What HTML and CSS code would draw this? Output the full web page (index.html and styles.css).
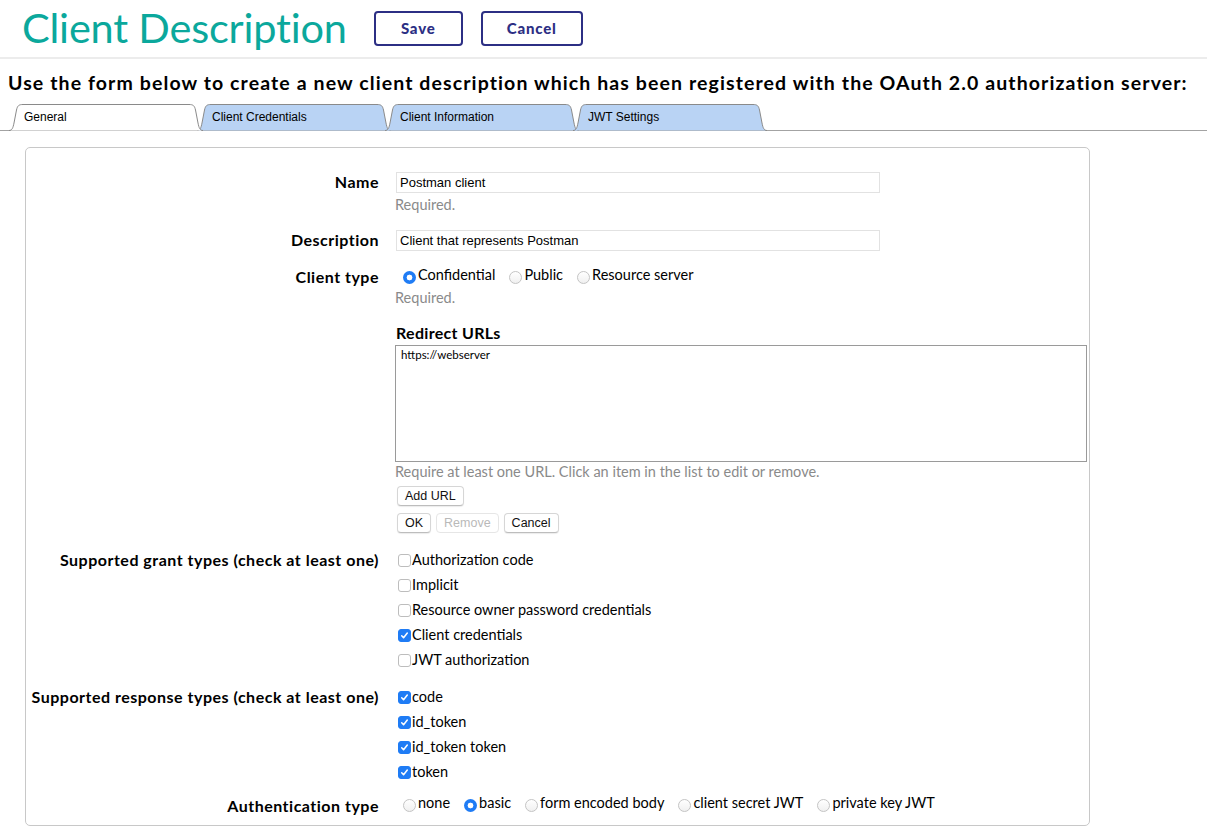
FILE: index.html
```html
<!DOCTYPE html>
<html>
<head>
<meta charset="utf-8">
<link rel="stylesheet" href="styles.css">
</head>
<body>
<header class="topbar">
  <h1 class="title">Client Description</h1>
  <button class="hbtn save">Save</button>
  <button class="hbtn cancel">Cancel</button>
</header>
<p class="intro">Use the form below to create a new client description which has been registered with the OAuth 2.0 authorization server:</p>
<nav class="tabs">
  <div class="tab active"><svg class="tabshape" viewBox="0 0 194 27" preserveAspectRatio="none"><path d="M0 26.5 C3 26.5 4 24 5 19 L7.5 6 C8.5 1.5 10 0.5 14 0.5 L180 0.5 C184 0.5 185.5 1.5 186.5 6 L189 19 C190 24 191 26.5 194 26.5" /></svg><span>General</span></div>
  <div class="tab"><svg class="tabshape" viewBox="0 0 194 27" preserveAspectRatio="none"><path d="M0 26.5 C3 26.5 4 24 5 19 L7.5 6 C8.5 1.5 10 0.5 14 0.5 L180 0.5 C184 0.5 185.5 1.5 186.5 6 L189 19 C190 24 191 26.5 194 26.5" /></svg><span>Client Credentials</span></div>
  <div class="tab"><svg class="tabshape" viewBox="0 0 194 27" preserveAspectRatio="none"><path d="M0 26.5 C3 26.5 4 24 5 19 L7.5 6 C8.5 1.5 10 0.5 14 0.5 L180 0.5 C184 0.5 185.5 1.5 186.5 6 L189 19 C190 24 191 26.5 194 26.5" /></svg><span>Client Information</span></div>
  <div class="tab"><svg class="tabshape" viewBox="0 0 194 27" preserveAspectRatio="none"><path d="M0 26.5 C3 26.5 4 24 5 19 L7.5 6 C8.5 1.5 10 0.5 14 0.5 L180 0.5 C184 0.5 185.5 1.5 186.5 6 L189 19 C190 24 191 26.5 194 26.5" /></svg><span>JWT Settings</span></div>
</nav>

<section class="card">
  <div class="row row-name">
    <div class="label">Name</div>
    <div class="field">
      <div class="input">Postman client</div>
      <div class="hint">Required.</div>
    </div>
  </div>

  <div class="row row-desc">
    <div class="label">Description</div>
    <div class="field">
      <div class="input">Client that represents Postman</div>
    </div>
  </div>

  <div class="row row-type">
    <div class="label label-type">Client type</div>
    <div class="field">
      <div class="options">
        <span class="opt"><span class="radio on"></span>Confidential</span>
        <span class="opt"><span class="radio"></span>Public</span>
        <span class="opt"><span class="radio"></span>Resource server</span>
      </div>
      <div class="hint hint-type">Required.</div>
    </div>
  </div>

  <div class="row row-urls">
    <div class="label"></div>
    <div class="field">
      <div class="sublabel">Redirect URLs</div>
      <div class="textarea">https://webserver</div>
      <div class="hint hint-url">Require at least one URL. Click an item in the list to edit or remove.</div>
      <div class="btnrow first"><button class="sbtn">Add URL</button></div>
      <div class="btnrow"><button class="sbtn">OK</button><button class="sbtn disabled">Remove</button><button class="sbtn">Cancel</button></div>
    </div>
  </div>

  <div class="row row-grant">
    <div class="label">Supported grant types (check at least one)</div>
    <div class="field checks">
      <div class="check"><span class="box"></span>Authorization code</div>
      <div class="check"><span class="box"></span>Implicit</div>
      <div class="check"><span class="box"></span>Resource owner password credentials</div>
      <div class="check"><span class="box on"><svg viewBox="0 0 13 13"><path d="M3.2 6.8 L5.4 9.2 L9.8 3.6"/></svg></span>Client credentials</div>
      <div class="check"><span class="box"></span>JWT authorization</div>
    </div>
  </div>

  <div class="row row-resp">
    <div class="label">Supported response types (check at least one)</div>
    <div class="field checks">
      <div class="check"><span class="box on"><svg viewBox="0 0 13 13"><path d="M3.2 6.8 L5.4 9.2 L9.8 3.6"/></svg></span>code</div>
      <div class="check"><span class="box on"><svg viewBox="0 0 13 13"><path d="M3.2 6.8 L5.4 9.2 L9.8 3.6"/></svg></span>id_token</div>
      <div class="check"><span class="box on"><svg viewBox="0 0 13 13"><path d="M3.2 6.8 L5.4 9.2 L9.8 3.6"/></svg></span>id_token token</div>
      <div class="check"><span class="box on"><svg viewBox="0 0 13 13"><path d="M3.2 6.8 L5.4 9.2 L9.8 3.6"/></svg></span>token</div>
    </div>
  </div>

  <div class="row row-auth">
    <div class="label">Authentication type</div>
    <div class="field">
      <div class="options auth">
        <span class="opt"><span class="radio"></span>none</span>
        <span class="opt"><span class="radio on"></span>basic</span>
        <span class="opt"><span class="radio"></span>form encoded body</span>
        <span class="opt"><span class="radio"></span>client secret JWT</span>
        <span class="opt"><span class="radio"></span>private key JWT</span>
      </div>
    </div>
  </div>
</section>
</body>
</html>
```

FILE: styles.css
```css
* { box-sizing: border-box; }
html, body { margin: 0; padding: 0; background: #fff; }
body {
  font-family: "Lato", "Open Sans", sans-serif;
  color: #000;
  width: 1207px;
  height: 835px;
  overflow: hidden;
}

.topbar {
  display: flex;
  align-items: center;
  height: 59px;
  padding: 0 0 2px 22px;
  border-bottom: 2px solid #ececec;
}
.title {
  margin: 0 27px 0 0;
  font-size: 41.5px;
  font-weight: 400;
  color: #0ba89c;
  line-height: 1;
  letter-spacing: -0.2px;
}
.hbtn {
  height: 35px;
  border: 2px solid #2c2f84;
  border-radius: 4px;
  background: #fff;
  color: #2c2f84;
  font-family: "Lato", sans-serif;
  font-weight: 900;
  font-size: 15px;
  letter-spacing: 0.8px;
  padding: 0;
}
.save { width: 89px; margin-right: 18px; margin-top: 1px; }
.cancel { width: 102px; margin-top: 1px; }

.intro {
  margin: 13px 0 0 8px;
  font-size: 19.5px;
  font-weight: 700;
  line-height: 22px;
  letter-spacing: 1.1px;
  white-space: nowrap;
}

.tabs {
  display: flex;
  height: 27px;
  margin-top: 10px;
  padding-left: 9px;
  border-bottom: 1px solid #a3a3a3;
}
.tab {
  position: relative;
  width: 194px;
  height: 27px;
  margin-right: -6px;
  font-family: "Liberation Sans", Arial, sans-serif;
  font-size: 12px;
  line-height: 27px;
  padding-left: 15px;
  z-index: 1;
}
.tab.active { z-index: 5; }
.tabshape {
  position: absolute;
  left: 0; top: 0;
  width: 194px;
  height: 27px;
  z-index: -1;
  overflow: visible;
}
.tabshape path { fill: #b9d3f4; stroke: #8a8a8a; stroke-width: 1; }
.tab.active .tabshape path { fill: #fff; }
.tab span { position: relative; }

.card {
  width: 1065px;
  margin: 16px 0 0 25px;
  border: 1px solid #c8c8c8;
  border-radius: 5px;
  padding: 24px 0 6px 0;
  height: 679px;
}
.row {
  display: grid;
  grid-template-columns: 353px 1fr;
  column-gap: 16px;
}
.label {
  text-align: right;
  font-weight: 700;
  font-size: 16px;
  letter-spacing: 0.5px;
  line-height: 20px;
}
.field { display: flex; flex-direction: column; align-items: flex-start; }
.input {
  width: 484px;
  height: 21px;
  margin-left: 1px;
  border: 1px solid #e2e2e2;
  font-family: "Liberation Sans", Arial, sans-serif;
  font-size: 13px;
  line-height: 19px;
  padding-left: 3px;
}
.hint {
  font-size: 14.5px;
  color: #8a8a8a;
  line-height: 18px;
  margin-top: 3px;
}
.row-desc { margin-top: 16px; }
.row-type { margin-top: 12px; }
.label-type { padding-top: 3px; line-height: 22px; }
.options { display: flex; align-items: center; height: 22px; font-size: 14.5px; }
.opt { display: inline-flex; align-items: center; margin-right: 6px; }
.opt .radio { margin: 6px 2px 0 8px; }
.hint-type { margin-top: 4px; }

.radio {
  display: inline-block;
  width: 13px;
  height: 13px;
  border-radius: 50%;
  border: 1px solid #c4c4c4;
  background: linear-gradient(#fff, #f0f0f0);
  flex: none;
}
.radio.on {
  border: none;
  background: radial-gradient(circle, #fff 0 2.6px, #1f7cf5 3.2px);
}

.row-urls { margin-top: 17px; }
.sublabel { font-weight: 700; font-size: 16px; letter-spacing: 0.3px; line-height: 18px; margin-left: 1px; }
.textarea {
  margin-top: 3px;
  width: 692px;
  height: 117px;
  border: 1px solid #9a9a9a;
  font-family: "Lato", sans-serif;
  font-size: 11.5px;
  padding: 2px 5px;
  line-height: 14px;
}
.hint-url { margin-top: 1px; margin-left: 0; }
.btnrow { display: flex; gap: 5px; margin-top: 7px; margin-left: 2px; }
.btnrow.first { margin-top: 5px; }
.sbtn {
  height: 20px;
  padding: 0 7px;
  font-family: "Liberation Sans", Arial, sans-serif;
  font-size: 12.5px;
  background: #fff;
  color: #111;
  border: 1px solid #d6d6d6;
  border-bottom-color: #bdbdbd;
  border-radius: 4px;
  box-shadow: 0 1px 1px rgba(0,0,0,0.08);
  line-height: 18px;
}
.sbtn.disabled { color: #b9b9b9; border-color: #e6e6e6; box-shadow: none; }

.checks { font-size: 14.5px; }
.check { display: flex; align-items: center; height: 25px; line-height: 25px; }
.box {
  display: inline-block;
  width: 13px;
  height: 13px;
  margin: 2px 1px 0 3px;
  border: 1px solid #bdbdbd;
  border-radius: 3px;
  background: #fff;
  flex: none;
}
.box.on { background: #1f7cf5; border-color: #1f7cf5; }
.box svg { display: block; width: 11px; height: 11px; }
.box path { fill: none; stroke: #fff; stroke-width: 1.8; stroke-linecap: round; stroke-linejoin: round; }

.row-grant { margin-top: 14px; }
.row-grant .label, .row-resp .label { line-height: 25px; }
.row-resp { margin-top: 12px; }
.row-auth { margin-top: 6px; }
.row-auth .label { line-height: 25px; padding-top: 3px; }
.options.auth { height: 25px; }
```
